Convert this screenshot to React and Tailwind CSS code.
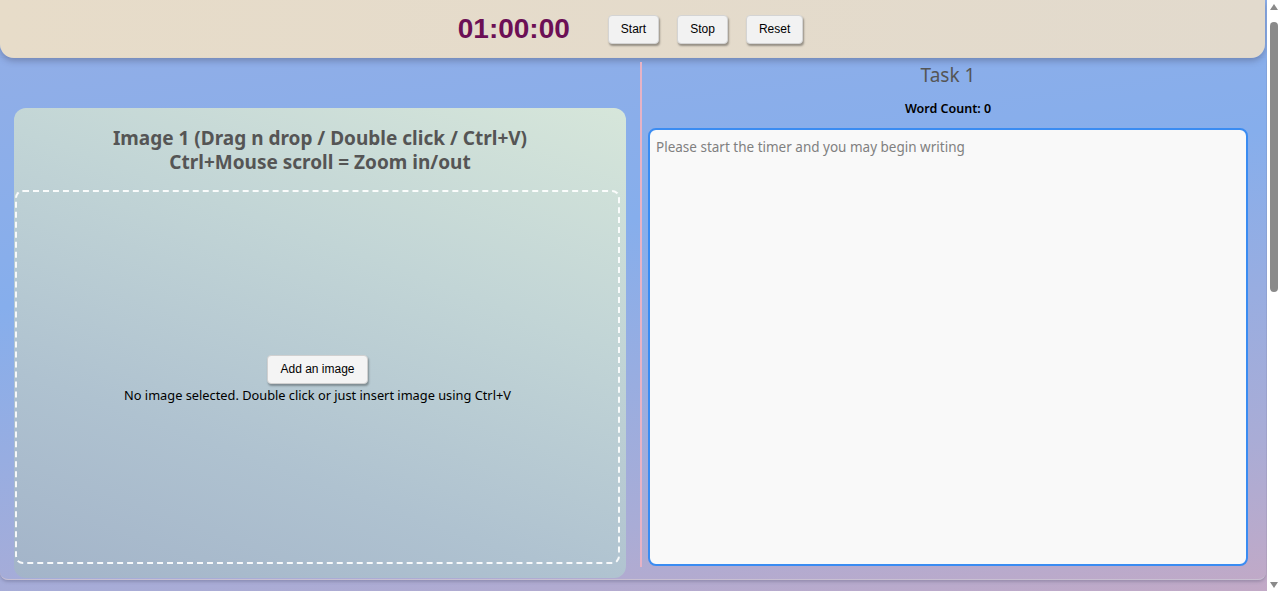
import React, { useState } from 'react';

const btn =
  "h-[29px] px-3 rounded-[4px] bg-[#f2f2f2] border border-[#d4d4d4] shadow-[1px_2px_2px_rgba(0,0,0,0.35)] text-[12px] text-black font-['Liberation_Sans',Arial,sans-serif]";

const App = () => {
  const [text, setText] = useState('');
  const words = text.trim() ? text.trim().split(/\s+/).length : 0;

  return (
    <div className="h-[591px] flex overflow-hidden font-['Noto_Sans',sans-serif]">
      <div className="flex-1 min-w-0 bg-[linear-gradient(172deg,#93aee6_0%,#86aeec_40%,#a9acd6_80%,#c2a9c6_100%)]">
        {/* Timer bar */}
        <header className="h-[58px] mr-[2px] rounded-b-[14px] bg-[linear-gradient(90deg,#e7dcc9,#e2dacd)] shadow-[0_3px_6px_rgba(60,60,90,0.35)] flex items-center justify-center pr-[4px]">
          <span className="text-[28px] font-bold text-[#6c0f55] font-['Liberation_Sans',Arial,sans-serif]">01:00:00</span>
          <div className="flex gap-[18px] ml-[38px]">
            <button className={btn}>Start</button>
            <button className={btn}>Stop</button>
            <button className={btn}>Reset</button>
          </div>
        </header>

        <main className="h-[522px] mr-[1px] flex rounded-b-[8px] shadow-[0_2px_3px_rgba(80,80,110,0.3)] border-b border-[#c9c0d2]">
          {/* Left column */}
          <section className="w-[640px] pl-[14px] pr-[14px] pt-[50px] pb-[1px] flex">
            <div className="flex-1 rounded-[12px] bg-[linear-gradient(200deg,#d6e6da_0%,#c2d5d6_35%,#afc2d0_70%,#a3b4c9_100%)] flex flex-col">
              <h2 className="pt-[18px] text-center text-[19px] leading-[24px] font-bold text-[#555555]">
                Image 1 (Drag n drop / Double click / Ctrl+V)
                <br />
                Ctrl+Mouse scroll = Zoom in/out
              </h2>
              <div className="mt-[16px] ml-[1px] mr-[6px] mb-[14px] flex-1 border-2 border-dashed border-white/90 rounded-[8px] flex flex-col items-center justify-center pt-[6px]">
                <button className="h-[29px] px-[12px] rounded-[4px] bg-[#f4f4f4] border border-[#d0d0d0] shadow-[1px_2px_2px_rgba(0,0,0,0.3)] text-[12px] text-black font-['Liberation_Sans',Arial,sans-serif]">
                  Add an image
                </button>
                <p className="mt-[2px] text-[12.8px] text-black">
                  No image selected. Double click or just insert image using Ctrl+V
                </p>
              </div>
            </div>
          </section>

          {/* Divider */}
          <div className="w-[2px] mt-[4px] mb-[12px] bg-[#e6b3c6]" />

          {/* Right column */}
          <section className="flex-1 pl-[6px] pr-[18px] pb-[13px] flex flex-col items-stretch">
            <h3 className="text-center text-[19px] leading-[26px] mt-[4px] text-[#555555]">Task 1</h3>
            <p className="text-center text-[12.5px] font-semibold text-black mt-[12px]">Word Count: {words}</p>
            <textarea
              autoFocus
              value={text}
              onChange={(e) => setText(e.target.value)}
              placeholder="Please start the timer and you may begin writing"
              className="mt-[9px] flex-1 resize-none rounded-[8px] border-2 border-[#3a8cf2] bg-[#f9f9f9] px-[6px] py-[7px] text-[13.5px] text-black placeholder:text-[#808080] outline-none"
            />
          </section>
        </main>
      </div>

      {/* Page scrollbar */}
      <aside className="w-[13px] bg-white flex flex-col items-center">
        <div className="mt-[4px] w-0 h-0 border-l-[4px] border-r-[4px] border-b-[6px] border-l-transparent border-r-transparent border-b-[#8a8a8a]" />
        <div className="mt-[12px] w-[8px] h-[270px] rounded-[4px] bg-[#8a8a8a]" />
        <div className="flex-1" />
        <div className="mb-[3px] w-0 h-0 border-l-[4px] border-r-[4px] border-t-[6px] border-l-transparent border-r-transparent border-t-[#8a8a8a]" />
      </aside>
    </div>
  );
};

export default App;
